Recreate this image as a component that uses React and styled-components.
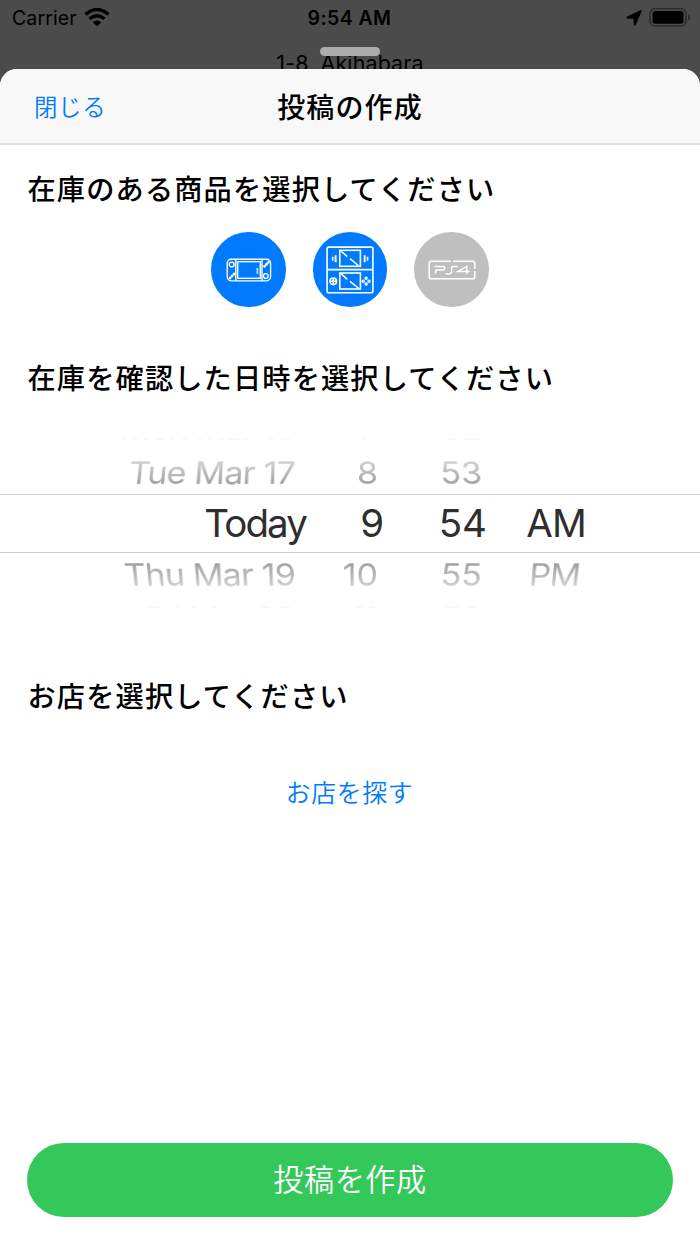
import React from "react";
import styled, { createGlobalStyle, css } from "styled-components";

const GlobalStyle = createGlobalStyle`
  * { box-sizing: border-box; }
  body { margin: 0; background: #4b4b4b; }
`;

const Screen = styled.div`
  width: 700px;
  height: 1244px;
  display: flex;
  flex-direction: column;
  overflow: hidden;
  background: #4b4b4b;
  font-family: Inter, "Noto Sans CJK JP", sans-serif;
  color: #000;
`;

const Backdrop = styled.div`
  position: relative;
  height: 69.4px;
  flex: none;
  overflow: hidden;
`;

const StatusBar = styled.div`
  display: grid;
  grid-template-columns: 1fr auto 1fr;
  align-items: center;
  height: 36px;
  padding: 0 9px 0 12px;
  font-size: 19.5px;
`;

const StatusSide = styled.div`
  display: flex;
  align-items: center;
  justify-content: ${(p) => (p.$end ? "flex-end" : "flex-start")};
  gap: 7px;
  svg { display: block; }
`;

const Carrier = styled.span`
  letter-spacing: 0.1px;
`;

const Clock = styled.span`
  font-weight: 600;
  font-size: 19.5px;
  letter-spacing: 0.4px;
  margin-right: 4px;
`;

const Address = styled.div`
  text-align: center;
  font-size: 21.5px;
  line-height: 26px;
  margin-top: 14px;
  letter-spacing: 0.1px;
`;

const Grabber = styled.div`
  position: absolute;
  left: 320px;
  top: 47px;
  width: 60px;
  height: 9px;
  border-radius: 5px;
  background: #acacac;
`;

const Sheet = styled.main`
  flex: 1;
  display: flex;
  flex-direction: column;
  background: #fff;
  border-radius: 17px 17px 0 0;
  overflow: hidden;
`;

const NavBar = styled.header`
  display: grid;
  grid-template-columns: 1fr auto 1fr;
  align-items: center;
  height: 75.6px;
  padding: 0 34px;
  background: #f8f8f8;
  border-bottom: 2px solid #dfdfdf;
`;

const Link = styled.button`
  border: 0;
  padding: 0;
  background: none;
  justify-self: start;
  color: #007aff;
  font-family: "Noto Sans CJK JP", sans-serif;
  font-weight: 350;
  font-size: ${(p) => p.$size}px;
  line-height: 36px;
  letter-spacing: ${(p) => p.$spacing || 0}px;
`;

const Title = styled.h1`
  margin: 0;
  font-family: "Noto Sans CJK JP", sans-serif;
  font-weight: 500;
  font-size: 28px;
  letter-spacing: 1.1px;
  line-height: 40px;
`;

const Heading = styled.h2`
  margin: 0;
  padding-left: 27.5px;
  font-family: "Noto Sans CJK JP", sans-serif;
  font-weight: 500;
  font-size: 28.2px;
  letter-spacing: 1.16px;
  line-height: 40px;
`;

const Section = styled.section`
  flex: none;
  display: flex;
  flex-direction: column;
  padding-top: ${(p) => p.$top}px;
  height: ${(p) => p.$height}px;
`;

const Products = styled.div`
  display: flex;
  justify-content: center;
  gap: 27px;
  margin-top: 24.4px;
`;

const Product = styled.button`
  width: 74.5px;
  height: 74.5px;
  padding: 0;
  border: 0;
  border-radius: 50%;
  display: grid;
  place-items: center;
  background: ${(p) => (p.$selected ? "#007aff" : "#bfbfbf")};
  svg { display: block; }
`;

const Picker = styled.div`
  display: flex;
  flex-direction: column;
  margin-top: 40.5px;
`;

const fades = {
  up: "linear-gradient(to bottom, rgba(0,0,0,.5) 20%, #000 75%)",
  down: "linear-gradient(to bottom, #000 25%, rgba(0,0,0,.5) 80%)",
};

const Wheel = styled.div`
  display: grid;
  grid-template-columns: ${(p) => p.$columns};
  align-items: center;
  white-space: pre;
  font-size: 38.5px;
  line-height: 46px;
  color: #a3a3a3;
  ${(p) =>
    p.$fade &&
    css`
      height: ${p.$fade === "up" ? 42 : 44}px;
      font-size: 34px;
      line-height: 42px;
      transform: perspective(1000px) rotateX(${p.$fade === "up" ? 26 : -26}deg);
      mask-image: ${fades[p.$fade]};
    `}
  ${(p) =>
    p.$current &&
    css`
      height: 59px;
      border-top: 1.5px solid #cdcdcd;
      border-bottom: 1.5px solid #cdcdcd;
      color: #2e2e2e;
    `}
`;

const Sliver = styled.div`
  height: 3px;
  overflow: hidden;
  display: flex;
  align-items: ${(p) => (p.$bottom ? "flex-end" : "flex-start")};
  color: #f8f8f8;
  ${Wheel} {
    flex: 1;
    color: inherit;
    font-size: 33px;
    line-height: 26px;
    height: 26px;
  }
`;

const Cell = styled.span`
  text-align: right;
  letter-spacing: ${(p) => p.$spacing ?? -0.8}px;
`;

const StoreAction = styled.div`
  display: flex;
  justify-content: center;
  margin-top: 58px;
  padding-right: 1px;
`;

const Footer = styled.footer`
  margin-top: auto;
  padding: 0 27px 27px;
`;

const Submit = styled.button`
  display: block;
  width: 100%;
  height: 74.5px;
  border: 0;
  border-radius: 38px;
  background: #34c85a;
  color: #fff;
  font-family: "Noto Sans CJK JP", sans-serif;
  font-weight: 350;
  font-size: 30.2px;
  letter-spacing: 0.5px;
  line-height: 44px;
  padding: 0 0 3px;
`;

const Spacer = styled.div`
  height: ${(p) => p.$height}px;
`;

const WifiIcon = () => (
  <svg width="26" height="20" viewBox="0 0 26 20" fill="none" stroke="#000" strokeWidth="3.4">
    <path d="M1.5 6.4Q13 -3.4 24.5 6.4" />
    <path d="M5.5 10.8Q13 4.5 20.5 10.8" />
    <path d="M13 18.3L8.8 14.2Q13 10.8 17.2 14.2Z" fill="#000" stroke="none" />
  </svg>
);

const LocationIcon = () => (
  <svg width="16" height="16" viewBox="0 0 16 16">
    <path d="M.7 7L14.3.5Q15.8 0 15.3 1.5L9.5 14.8Q8.6 16.2 8.1 14.8L7.7 8.6L1.2 8.2Q-.4 7.9.7 7Z" stroke="#000" strokeWidth=".5" />
  </svg>
);

const BatteryIcon = () => (
  <svg width="42" height="20" viewBox="0 0 42 20">
    <rect x="1" y=".6" width="36" height="17.4" rx="5" fill="none" stroke="#2d2d2d" strokeWidth="1.6" />
    <rect x="3.5" y="2.9" width="31" height="12.8" rx="3.2" />
    <path d="M39 6.6Q41.3 7 41.3 9.4Q41.3 11.8 39 12.4Z" fill="#2d2d2d" />
  </svg>
);

const SwitchIcon = () => (
  <svg width="46" height="24" viewBox="0 0 46 24" fill="none" stroke="#fff" strokeWidth="1.35">
    <rect x="1.2" y="1.2" width="43.4" height="21.6" rx="4" />
    <path d="M9.8 1V23M36 1V23" />
    <rect x="11.7" y="3.7" width="22.6" height="16.6" />
    <circle cx="5.7" cy="6.5" r="2.4" />
    <circle cx="39.8" cy="18" r="2.4" />
    <g strokeWidth="2.8" strokeLinecap="round">
      <path d="M4 20L4.1 19.9M6 18L6.1 17.9M8 16L8.1 15.9" />
      <path d="M38.5 8.3L38.6 8.2M40.6 6.2L40.7 6.1M42.6 4.2L42.7 4.1" />
    </g>
    <path d="M31.4 10V16" strokeWidth="1.8" opacity=".75" />
  </svg>
);

const HandheldIcon = () => (
  <svg width="48" height="48" viewBox="0 0 48 48" fill="none" stroke="#fff" strokeWidth="1.6">
    <rect x="1.1" y="1.1" width="45.8" height="45.6" rx="1.8" />
    <path d="M1 23.6H47" />
    <rect x="13.8" y="4.3" width="20.6" height="16" />
    <rect x="13.8" y="27" width="20.6" height="16" />
    <path d="M15 5L21.3 10.6M24 12.6L32.8 20M15 27.7L21.3 33.3M24 35.3L32.8 42.5" />
    <path d="M6.7 10.7V14.7M41.6 10.7V14.7" />
    <path d="M9.6 9.2V16.2M38.7 9.2V16.2" strokeWidth="1.9" />
    <circle cx="7.3" cy="35.3" r="3.3" />
    <path d="M7.3 32.4V38.2M4.4 35.3H10.2" />
    <g strokeWidth="1.3">
      <circle cx="40.1" cy="32.3" r="1.1" />
      <circle cx="40.1" cy="38.1" r="1.1" />
      <circle cx="37.2" cy="35.2" r="1.1" />
      <circle cx="43" cy="35.2" r="1.1" />
    </g>
  </svg>
);

const ConsoleIcon = () => (
  <svg width="48" height="20" viewBox="0 0 48 20" fill="none" stroke="#fff" strokeWidth="1.5">
    <path d="M23 1.2H3Q1.2 1.2 1.2 3V17Q1.2 18.8 3 18.8H45Q46.8 18.8 46.8 17V11M46.8 8.7V3Q46.8 1.2 45 1.2H25.3" />
    <path d="M6.6 6.6H15Q16.7 6.6 16.7 8.2Q16.7 9.9 15 9.9H9.2Q7.6 9.9 7.6 11.6V13.8" />
    <path d="M30 6.6H25.3Q23.6 6.6 23.6 8.2V12.1Q23.6 13.7 22 13.7H17.5" />
    <path d="M38.8 14V6.4L29.8 11.4H41.5" />
  </svg>
);

const rows = {
  before: ["Mon Mar 16", "7", "52", ""],
  previous: ["Tue Mar 17", "8", "53", ""],
  current: ["Today", "9", "54", "AM"],
  next: ["Thu Mar 19", "10", "55", "PM"],
  after: ["Fri Mar 20", "11", "56", ""],
};

const sideColumns = "295px 83px 104px 98px";

function WheelRow({ values, columns = sideColumns, dateSpacing = -0.8, ...rest }) {
  return (
    <Wheel $columns={columns} {...rest}>
      <Cell $spacing={dateSpacing}>{values[0]}</Cell>
      <Cell $spacing={0}>{values[1]}</Cell>
      <Cell $spacing={0}>{values[2]}</Cell>
      <Cell>{values[3]}</Cell>
    </Wheel>
  );
}

export default function App() {
  return (
    <>
      <GlobalStyle />
      <Screen>
        <Backdrop>
          <StatusBar>
            <StatusSide>
              <Carrier>Carrier</Carrier>
              <WifiIcon />
            </StatusSide>
            <Clock>9:54 AM</Clock>
            <StatusSide $end>
              <LocationIcon />
              <BatteryIcon />
            </StatusSide>
          </StatusBar>
          <Address>1-8, Akihabara</Address>
          <Grabber />
        </Backdrop>
        <Sheet>
          <NavBar>
            <Link $size={23.4} $spacing={0.7}>閉じる</Link>
            <Title>投稿の作成</Title>
          </NavBar>
          <Section $top={23} $height={190}>
            <Heading>在庫のある商品を選択してください</Heading>
            <Products>
              <Product $selected><SwitchIcon /></Product>
              <Product $selected><HandheldIcon /></Product>
              <Product><ConsoleIcon /></Product>
            </Products>
          </Section>
          <Section $top={22.5} $height={318}>
            <Heading>在庫を確認した日時を選択してください</Heading>
            <Picker>
              <Sliver $bottom><WheelRow values={rows.before} /></Sliver>
              <Spacer $height={11} />
              <WheelRow values={rows.previous} $fade="up" />
              <WheelRow values={rows.current} columns="306px 78px 103px 99px" dateSpacing={-1.9} $current />
              <WheelRow values={rows.next} $fade="down" />
              <Spacer $height={8} />
              <Sliver><WheelRow values={rows.after} /></Sliver>
            </Picker>
          </Section>
          <Section $top={22} $height={160}>
            <Heading>お店を選択してください</Heading>
            <StoreAction>
              <Link $size={24.8} $spacing={0.7}>お店を探す</Link>
            </StoreAction>
          </Section>
          <Footer>
            <Submit>投稿を作成</Submit>
          </Footer>
        </Sheet>
      </Screen>
    </>
  );
}
